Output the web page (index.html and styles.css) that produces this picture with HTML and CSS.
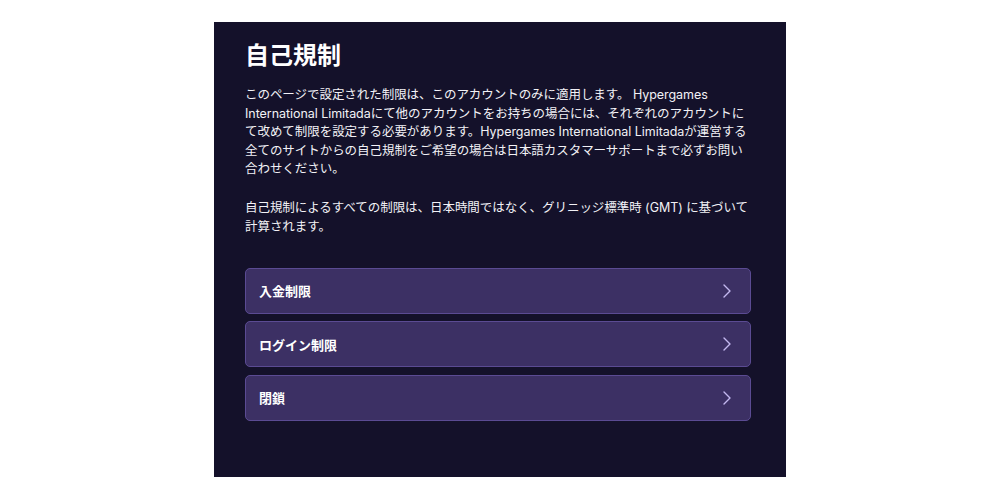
FILE: index.html
```html
<!DOCTYPE html>
<html lang="ja">
<head>
<meta charset="utf-8">
<link rel="stylesheet" href="styles.css">
</head>
<body>
<main class="panel">
  <h1 class="title">自己規制</h1>
  <p class="text">このページで設定された制限は、このアカウントのみに適用します。 Hypergames International Limitadaにて他のアカウントをお持ちの場合には、それぞれのアカウントにて改めて制限を設定する必要があります。Hypergames International Limitadaが運営する全てのサイトからの自己規制をご希望の場合は日本語カスタマーサポートまで必ずお問い合わせください。</p>
  <p class="text">自己規制によるすべての制限は、日本時間ではなく、グリニッジ標準時 (GMT) に基づいて計算されます。</p>
  <div class="list">
    <a class="row" href="#"><span>入金制限</span><svg class="chev" viewBox="0 0 10 16"><path d="M2 2 L8 8 L2 14" fill="none" stroke="currentColor" stroke-width="1.4" stroke-linecap="round" stroke-linejoin="round"/></svg></a>
    <a class="row" href="#"><span>ログイン制限</span><svg class="chev" viewBox="0 0 10 16"><path d="M2 2 L8 8 L2 14" fill="none" stroke="currentColor" stroke-width="1.4" stroke-linecap="round" stroke-linejoin="round"/></svg></a>
    <a class="row" href="#"><span>閉鎖</span><svg class="chev" viewBox="0 0 10 16"><path d="M2 2 L8 8 L2 14" fill="none" stroke="currentColor" stroke-width="1.4" stroke-linecap="round" stroke-linejoin="round"/></svg></a>
  </div>
</main>
</body>
</html>
```
FILE: styles.css
```css
html, body {
  margin: 0;
  padding: 0;
  background: #ffffff;
}
body {
  font-family: Inter, "Noto Sans CJK JP", sans-serif;
  color: #ffffff;
}
.panel {
  width: 572px;
  height: 455px;
  box-sizing: border-box;
  margin: 22px auto 0;
  padding: 18px 38px 0 31px;
  background: #14112a;
}
.title {
  margin: 0 0 14px;
  font-size: 24px;
  line-height: 32px;
  font-weight: 700;
}
.text {
  margin: 0 0 20.5px;
  font-size: 12.5px;
  line-height: 18.6px;
  letter-spacing: -0.05px;
  color: #f2f1f6;
}
.list {
  margin-top: 31px;
  margin-right: -3px;
  display: flex;
  flex-direction: column;
  gap: 7.5px;
}
.row {
  display: flex;
  align-items: center;
  justify-content: space-between;
  height: 46px;
  box-sizing: border-box;
  padding: 0 18px 0 13px;
  background: #3c3064;
  border: 1px solid #5b4b93;
  border-radius: 5px;
  color: #ffffff;
  text-decoration: none;
  font-size: 13px;
  font-weight: 700;
}
.chev {
  width: 10px;
  height: 16px;
  color: #c4b8f0;
}
```
